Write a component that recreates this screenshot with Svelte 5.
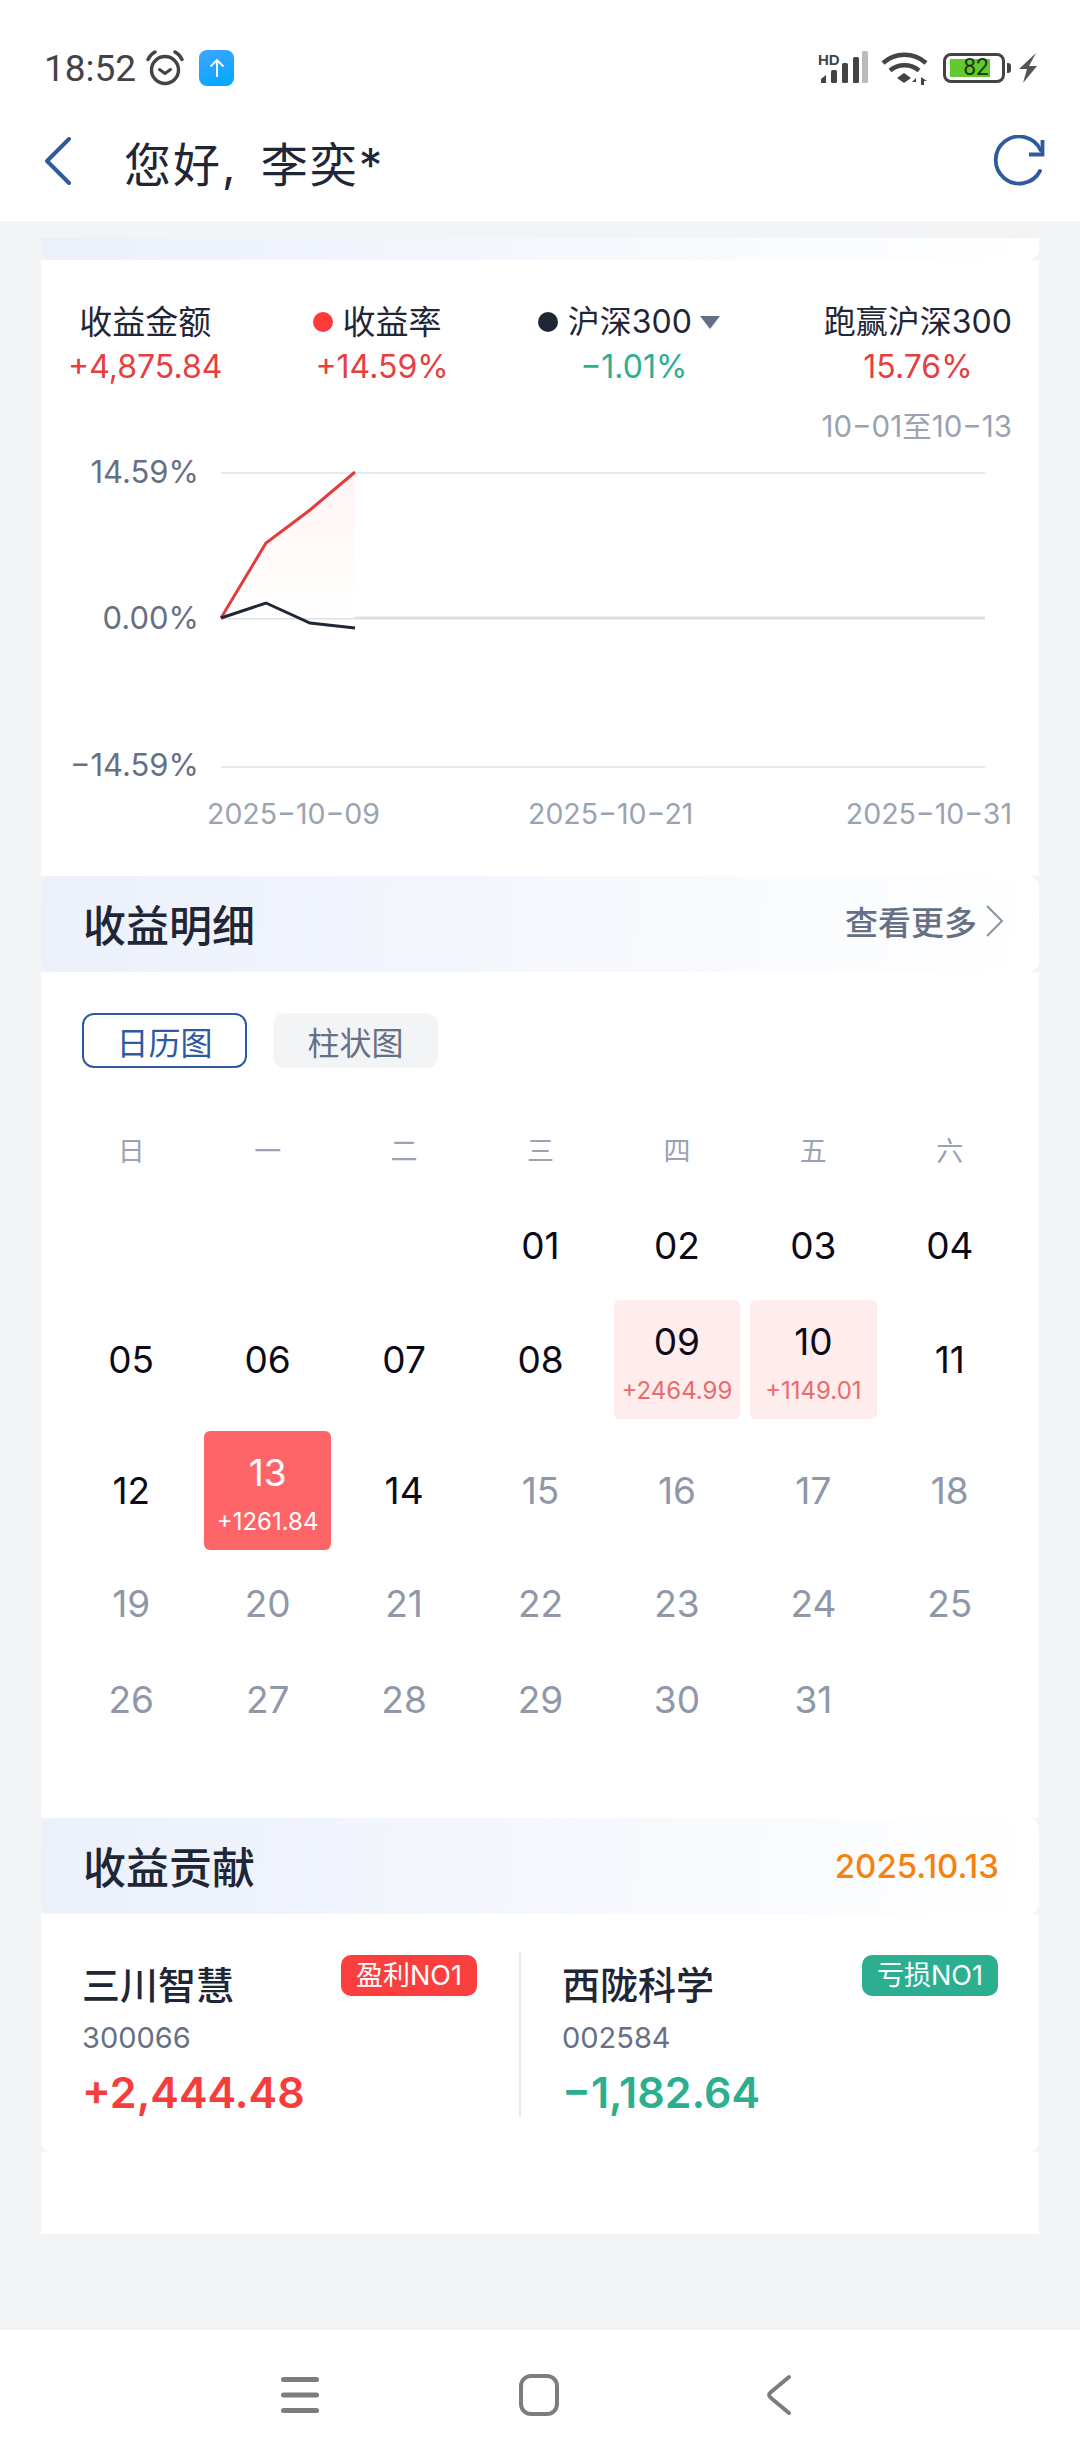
<script>
  const weekdays = ["日", "一", "二", "三", "四", "五", "六"];
  const blanks = [1, 2, 3];
  const days = [
    { d: "01" }, { d: "02" }, { d: "03" }, { d: "04" },
    { d: "05" }, { d: "06" }, { d: "07" }, { d: "08" },
    { d: "09", sub: "+2464.99", kind: "up" },
    { d: "10", sub: "+1149.01", kind: "up" },
    { d: "11" }, { d: "12" },
    { d: "13", sub: "+1261.84", kind: "active" },
    { d: "14" },
    { d: "15", off: true }, { d: "16", off: true }, { d: "17", off: true }, { d: "18", off: true },
    { d: "19", off: true }, { d: "20", off: true }, { d: "21", off: true }, { d: "22", off: true },
    { d: "23", off: true }, { d: "24", off: true }, { d: "25", off: true }, { d: "26", off: true },
    { d: "27", off: true }, { d: "28", off: true }, { d: "29", off: true }, { d: "30", off: true },
    { d: "31", off: true },
  ];
</script>

<div class="page">
  <div class="top">
    <div class="status">
      <div class="status-left">
        <span class="time">18:52</span>
        <svg class="alarm" width="38" height="36" viewBox="0 0 38 36" fill="none" stroke="#444" stroke-width="3.4">
          <circle cx="19" cy="20" r="13.5" />
          <path d="M13.5 19.5l5.5 4 5.5-4" stroke-width="3" stroke-linecap="round" stroke-linejoin="round" />
          <path d="M2 9.5C3.5 6 6 3.5 9 2M36 9.5C34.500 6 32 3.500 29 2" stroke-linecap="round" />
        </svg>
        <span class="upload">
          <svg width="18" height="20" viewBox="0 0 18 20" fill="none" stroke="#fff" stroke-width="1.8">
            <path d="M9 19V2M2.500 8.500L9 2l6.500 6.500" />
          </svg>
        </span>
      </div>
      <div class="status-right">
        <svg class="signal" width="50" height="34" viewBox="0 0 50 34">
          <text x="0" y="14" class="hd">HD</text>
          <g fill="#444">
            <path d="M3 32v-4l5-4v8z" />
            <rect x="13" y="19" width="6" height="13" rx="1.500" />
            <rect x="24" y="12" width="6" height="20" rx="1.500" />
          </g>
          <rect x="35" y="6" width="6" height="26" rx="1.500" fill="#444" />
          <rect x="44" y="0" width="6" height="32" rx="1.500" fill="#bbb" />
        </svg>
        <svg class="wifi" width="47" height="34" viewBox="0 0 47 34" fill="none" stroke="#444" stroke-width="4.500">
          <path d="M2 12C14 1 33 1 45 12" />
          <path d="M9 19.500C17 12.500 30 12.500 38 19.500" />
          <path d="M23 22l-7 5 7 5 7-5z" fill="#444" stroke="none" />
          <path d="M35 27l-4 4h4zM40 26v8h3v-4h3z" fill="#444" stroke="none" />
        </svg>
        <div class="battery">
          <div class="batt-shell"><span class="batt-fill">82</span></div>
          <span class="batt-cap"></span>
        </div>
        <svg class="bolt" width="18" height="30" viewBox="0 0 18 30">
          <path d="M17 0L0 16h8L4 30 18 13h-8z" fill="#555" />
        </svg>
      </div>
    </div>
    <div class="nav">
      <svg class="back" width="26" height="48" viewBox="0 0 26 48" fill="none" stroke="#2f5a9e" stroke-width="4" stroke-linecap="round" stroke-linejoin="round">
        <path d="M24 2L2 24l22 22" />
      </svg>
      <span class="title">您好, 李奕*</span>
      <svg class="refresh" width="52" height="52" viewBox="0 0 52 52" fill="none" stroke="#2f5a9e" stroke-width="3.800">
        <path d="M47 36A23.500 23.500 0 1 1 47.500 15" stroke-linecap="round" />
        <path d="M49.500 5v14.500H36" />
      </svg>
    </div>
  </div>

  <div class="content">
    <div class="strip"></div>

    <section class="card chart-card">
      <div class="stats">
        <div class="stat">
          <div class="label">收益金额</div>
          <div class="val red">+4,875.84</div>
        </div>
        <div class="stat">
          <div class="label"><i class="dot dot-red"></i>收益率</div>
          <div class="val red nudge">+14.59%</div>
        </div>
        <div class="stat third">
          <div class="label"><i class="dot dot-dark"></i>沪深300<i class="tri"></i></div>
          <div class="val green shift">−1.01%</div>
        </div>
        <div class="stat last">
          <div class="label">跑赢沪深300</div>
          <div class="val red">15.76%</div>
        </div>
      </div>
      <div class="range">10−01至10−13</div>
      <svg class="chart" width="998" height="392" viewBox="41 440 998 392">
        <defs>
          <linearGradient id="area" x1="0" y1="0" x2="0" y2="1">
            <stop offset="0" stop-color="#fff4f3" />
            <stop offset="1" stop-color="#fff" />
          </linearGradient>
        </defs>
        <line x1="221" y1="473" x2="985" y2="473" stroke="#e7e9ee" stroke-width="2" />
        <line x1="221" y1="618" x2="985" y2="618" stroke="#dcdfe5" stroke-width="3" />
        <line x1="221" y1="767" x2="985" y2="767" stroke="#e7e9ee" stroke-width="2" />
        <path d="M221 618L266 543L310 510L355 472V618Z" fill="url(#area)" />
        <polyline points="221,618 266,543 310,510 355,472" fill="none" stroke="#e23d3d" stroke-width="3" />
        <polyline points="221,618 266,603 310,623 355,628" fill="none" stroke="#1f2636" stroke-width="3" />
        <text x="199" y="483" text-anchor="end" class="ylab">14.59%</text>
        <text x="199" y="629" text-anchor="end" class="ylab">0.00%</text>
        <text x="199" y="776" text-anchor="end" class="ylab">−14.59%</text>
        <text x="207" y="824" class="xlab">2025−10−09</text>
        <text x="528" y="824" class="xlab">2025−10−21</text>
        <text x="1012" y="824" text-anchor="end" class="xlab">2025−10−31</text>
      </svg>
    </section>

    <div class="sec-head">
      <span class="sec-title">收益明细</span>
      <span class="more">查看更多
        <svg width="17" height="32" viewBox="0 0 17 32" fill="none" stroke="#8b93a5" stroke-width="2">
          <path d="M1 1l15 15L1 31" />
        </svg>
      </span>
    </div>

    <section class="card cal-card">
      <div class="tabs">
        <span class="tab on">日历图</span>
        <span class="tab">柱状图</span>
      </div>
      <div class="weekdays">
        {#each weekdays as w}
          <span>{w}</span>
        {/each}
      </div>
      <div class="grid">
        {#each blanks as b}
          <div class="cell"></div>
        {/each}
        {#each days as day}
          <div class="cell {day.kind || ''}" class:off={day.off}>
            <span class="num">{day.d}</span>
            {#if day.sub}
              <span class="sub">{day.sub}</span>
            {/if}
          </div>
        {/each}
      </div>
    </section>

    <div class="sec-head">
      <span class="sec-title">收益贡献</span>
      <span class="date">2025.10.13</span>
    </div>

    <section class="card contrib">
      <div class="side">
        <div class="name-row">
          <span class="name">三川智慧</span>
          <span class="badge b-red">盈利NO1</span>
        </div>
        <div class="code">300066</div>
        <div class="amount a-red">+2,444.48</div>
      </div>
      <div class="side right">
        <div class="name-row">
          <span class="name">西陇科学</span>
          <span class="badge b-green">亏损NO1</span>
        </div>
        <div class="code">002584</div>
        <div class="amount a-green">−1,182.64</div>
      </div>
    </section>

    <div class="card tail"></div>
  </div>

  <div class="bottom">
    <svg width="38" height="36" viewBox="0 0 38 36" fill="#7d7d7d">
      <rect x="0" y="0" width="38" height="5" rx="2.500" />
      <rect x="0" y="15.500" width="38" height="5" rx="2.500" />
      <rect x="0" y="31" width="38" height="5" rx="2.500" />
    </svg>
    <svg width="40" height="42" viewBox="0 0 40 42" fill="none" stroke="#7d7d7d" stroke-width="4">
      <rect x="2" y="2" width="36" height="38" rx="10" />
    </svg>
    <svg width="26" height="42" viewBox="0 0 26 42" fill="none" stroke="#7d7d7d" stroke-width="4" stroke-linecap="round" stroke-linejoin="round">
      <path d="M23 3L5 18c-2.500 2-2.500 4 0 6l18 15" />
    </svg>
  </div>
</div>

<style>
  :global(body) {
    margin: 0;
    background: #f3f4f6;
  }
  .page {
    width: 1080px;
    height: 2460px;
    display: flex;
    flex-direction: column;
    background: #f3f4f6;
    font-family: Inter, "Noto Sans CJK SC", sans-serif;
    color: #1f2636;
    overflow: hidden;
  }
  .top {
    background: #fff;
    height: 221px;
    box-sizing: border-box;
    padding: 48px 43px 0 44px;
  }
  .status {
    display: flex;
    justify-content: space-between;
    align-items: center;
    height: 40px;
  }
  .status-left,
  .status-right {
    display: flex;
    align-items: center;
  }
  .time {
    font-family: Roboto, sans-serif;
    font-size: 37px;
    color: #444;
    width: 102px;
  }
  .upload {
    width: 35px;
    height: 36px;
    margin-left: 15px;
    border-radius: 8px;
    background: linear-gradient(160deg, #3fa5ff, #00a8ff);
    display: flex;
    align-items: center;
    justify-content: center;
  }
  .hd {
    font: 700 15px "Liberation Sans", sans-serif;
    fill: #444;
  }
  .wifi {
    margin-left: 13px;
  }
  .battery {
    display: flex;
    align-items: center;
    margin-left: 15px;
  }
  .batt-shell {
    width: 62px;
    height: 30px;
    box-sizing: border-box;
    border: 3px solid #444;
    border-radius: 8px;
    padding: 3px 4px;
  }
  .batt-fill {
    display: block;
    width: 40px;
    height: 18px;
    box-sizing: border-box;
    padding-right: 1px;
    background: #62c92f;
    color: #1e3a10;
    font: 23px/18px Roboto, sans-serif;
    text-align: right;
  }
  .batt-cap {
    width: 4px;
    height: 10px;
    margin-left: 2px;
    background: #444;
    border-radius: 0 3px 3px 0;
  }
  .bolt {
    margin-left: 8px;
  }
  .nav {
    display: flex;
    align-items: center;
    margin-top: 43px;
    height: 60px;
  }
  .back {
    margin-left: 1px;
  }
  .title {
    margin-left: 53px;
    font-size: 47px;
    letter-spacing: 2px;
    word-spacing: 8px;
    flex: 1;
  }
  .refresh {
    margin-right: -8px;
  }

  .content {
    flex: 1;
    padding: 17px 41px 0;
  }
  .strip {
    height: 22px;
    background: linear-gradient(95deg, #ebf0fb, #fff);
    border-radius: 0 0 10px 10px;
  }
  .card {
    background: #fff;
  }
  .chart-card {
    height: 616px;
    position: relative;
    box-sizing: border-box;
    padding-top: 42px;
  }
  .stats {
    display: flex;
    padding: 0 27px;
    gap: 88px;
  }
  .stat {
    text-align: center;
  }
  .stat.third {
    margin-left: 6px;
  }
  .stat.third .label,
  .stat.last .label {
    font-size: 32px;
  }
  .stat.last {
    margin-left: auto;
  }
  .label {
    font-size: 33px;
    line-height: 40px;
    display: flex;
    align-items: center;
    justify-content: center;
    white-space: nowrap;
  }
  .dot {
    width: 20px;
    height: 20px;
    border-radius: 50%;
    margin-right: 10px;
  }
  .dot-red {
    background: #fb3b3b;
  }
  .dot-dark {
    background: #1f2636;
  }
  .tri {
    width: 0;
    height: 0;
    margin-left: 8px;
    border-left: 10px solid transparent;
    border-right: 10px solid transparent;
    border-top: 13px solid #667085;
  }
  .val {
    font-size: 32px;
    line-height: 44px;
    margin-top: 3px;
    white-space: nowrap;
  }
  .nudge {
    margin-left: 5px;
    margin-right: -5px;
  }
  .shift {
    padding-left: 10px;
  }
  .red {
    color: #e5403f;
  }
  .green {
    color: #2cae91;
  }
  .range {
    text-align: right;
    padding-right: 27px;
    margin-top: 17px;
    font-size: 29.500px;
    line-height: 40px;
    color: #9aa3b2;
  }
  .chart {
    position: absolute;
    left: 0;
    top: 180px;
  }
  .ylab {
    font-size: 31px;
    fill: #667085;
  }
  .xlab {
    font-size: 28.500px;
    fill: #9aa3b2;
  }

  .sec-head {
    height: 96px;
    box-sizing: border-box;
    padding: 0 36px 0 42px;
    display: flex;
    align-items: center;
    justify-content: space-between;
    background: linear-gradient(95deg, #ebf0fb, #fff);
    border-radius: 10px;
  }
  .sec-title {
    font-size: 43px;
    font-weight: 500;
    margin-bottom: 2px;
  }
  .more {
    display: flex;
    align-items: center;
    gap: 9px;
    font-size: 33px;
    font-weight: 500;
    color: #667085;
    margin-bottom: 6px;
  }
  .date {
    font-size: 33px;
    font-weight: 500;
    color: #f5820f;
    margin-right: 4px;
  }

  .cal-card {
    height: 846px;
    box-sizing: border-box;
    padding: 41px 21px 0 22px;
  }
  .tabs {
    display: flex;
    gap: 26px;
    padding-left: 19px;
  }
  .tab {
    width: 165px;
    height: 55px;
    box-sizing: border-box;
    border-radius: 12px;
    background: #f3f4f6;
    color: #667085;
    font-size: 32px;
    display: flex;
    align-items: center;
    justify-content: center;
  }
  .tab.on {
    background: #fff;
    border: 2px solid #2f5a9e;
    color: #2f5a9e;
  }
  .weekdays {
    display: grid;
    grid-template-columns: repeat(7, 1fr);
    margin-top: 64px;
    height: 40px;
    font-size: 27px;
    line-height: 40px;
    text-align: center;
    color: #9aa3b2;
  }
  .grid {
    display: grid;
    grid-template-columns: repeat(7, 1fr);
    row-gap: 12px;
    margin-top: 32px;
  }
  .cell {
    min-height: 84px;
    margin: 0 5px;
    display: flex;
    flex-direction: column;
    align-items: center;
    justify-content: center;
    border-radius: 6px;
    color: #0d0a18;
  }
  .num {
    font-size: 37px;
    line-height: 44px;
  }
  .sub {
    font-size: 24px;
    line-height: 34px;
    margin-top: 10px;
  }
  .up,
  .active {
    min-height: 119px;
    justify-content: flex-start;
    padding-top: 20px;
    box-sizing: border-box;
  }
  .up {
    background: #ffecec;
  }
  .up .sub {
    color: #ea6b6b;
  }
  .active {
    background: #fe6568;
    color: #fff;
  }
  .off {
    color: #8f98a8;
  }

  .contrib {
    height: 238px;
    box-sizing: border-box;
    padding-top: 38px;
    display: flex;
    border-radius: 0 0 10px 10px;
  }
  .side {
    box-sizing: border-box;
    width: 480px;
    height: 165px;
    padding: 3px 42px 0 41px;
    border-right: 2px solid #e5e7eb;
  }
  .side.right {
    flex: 1;
    border-right: 0;
    padding-right: 41px;
  }
  .name-row {
    display: flex;
    justify-content: space-between;
    align-items: flex-start;
    height: 65px;
  }
  .name {
    font-size: 38px;
    font-weight: 500;
    line-height: 50px;
    margin-top: 5px;
  }
  .badge {
    height: 41px;
    padding: 0 15px;
    border-radius: 10px;
    color: #fff;
    font-size: 27px;
    line-height: 41px;
  }
  .b-red {
    background: #fb3f3f;
  }
  .b-green {
    background: #2cae91;
  }
  .code {
    font-size: 29px;
    line-height: 36px;
    color: #667085;
  }
  .amount {
    font-size: 43px;
    font-weight: 600;
    line-height: 60px;
    margin-top: 6px;
  }
  .a-red {
    color: #f63d3d;
  }
  .a-green {
    color: #2cae91;
  }
  .tail {
    height: 82px;
  }

  .bottom {
    height: 130px;
    background: #fff;
    display: flex;
    align-items: center;
    padding-left: 281px;
  }
  .bottom svg:nth-child(2) {
    margin-left: 200px;
  }
  .bottom svg:nth-child(3) {
    margin-left: 207px;
  }
</style>
